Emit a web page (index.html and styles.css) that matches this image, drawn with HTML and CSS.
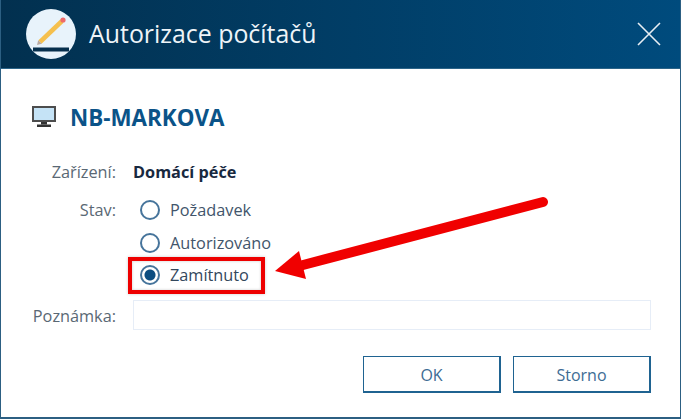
FILE: index.html
```html
<!DOCTYPE html>
<html lang="cs">
<head>
    <meta charset="UTF-8">
    <title>Autorizace počítačů</title>
    <link rel="stylesheet" href="styles.css">
</head>
<body>
    <div class="dialog">
        <div class="header">
            <svg class="logo" width="50" height="50" viewBox="0 0 50 50">
                <circle cx="25" cy="25" r="25" fill="#e8f3fb"/>
                <path d="M14 33 L36 12" stroke="#f5c04e" stroke-width="4.5"/>
                <path d="M15.800 34.800 L12.200 31.200 L11 36 Z" fill="#b9a8a0"/>
                <circle cx="37" cy="11" r="2.600" fill="#ee6a6a"/>
                <rect x="7" y="38.500" width="36" height="4" fill="#062f4d"/>
            </svg>
            <div class="title">Autorizace počítačů</div>
            <svg class="close" width="24" height="24" viewBox="0 0 24 24">
                <path d="M1 1 L23 23 M23 1 L1 23" stroke="#e8eef3" stroke-width="1.600" fill="none"/>
            </svg>
        </div>

        <div class="content">
            <div class="computer">
                <svg width="24" height="22" viewBox="0 0 24 22">
                    <rect x="1" y="1" width="22" height="14" fill="#c5e3f6" stroke="#4d4d4d" stroke-width="2"/>
                    <rect x="9" y="16" width="6" height="2.500" fill="#333"/>
                    <rect x="5" y="18.500" width="14" height="2.500" fill="#333"/>
                </svg>
                <span class="computer-name">NB-MARKOVA</span>
            </div>

            <div class="form">
                <div class="label device-label">Zařízení:</div>
                <div class="device">Domácí péče</div>

                <div class="label state-label">Stav:</div>
                <div class="radios">
                    <div class="radio"><span class="dot"></span>Požadavek</div>
                    <div class="radio"><span class="dot"></span>Autorizováno</div>
                    <div class="radio checked"><span class="dot"></span>Zamítnuto</div>
                </div>

                <div class="label note-label">Poznámka:</div>
                <div class="note"></div>
            </div>

            <div class="buttons">
                <div class="button">OK</div>
                <div class="button">Storno</div>
            </div>
        </div>

        <div class="highlight"></div>
        <svg class="arrow" width="290" height="110" viewBox="0 0 290 110">
            <path d="M270 13 L30 76" stroke="#f00000" stroke-width="10" stroke-linecap="round" fill="none"/>
            <path d="M2 82 L26 62 L33 90 Z" fill="#f00000"/>
        </svg>
    </div>
</body>
</html>
```

FILE: styles.css
```css
html, body {
    margin: 0;
    padding: 0;
}

body {
    width: 681px;
    height: 419px;
    font-family: "Open Sans", sans-serif;
    background-color: white;
    overflow: hidden;
}

.dialog {
    position: relative;
    box-sizing: border-box;
    width: 681px;
    height: 419px;
    background-color: white;
    border: 1px solid #2c5f82;
    border-top: none;
    border-bottom-width: 2px;
}

.header {
    display: flex;
    align-items: center;
    height: 68px;
    padding-left: 25px;
    padding-right: 19px;
    background: linear-gradient(to right, #02304f, #004b7d);
    border-bottom: 1px solid #2c6488;
}

.logo {
    flex: none;
}

.title {
    flex: 1;
    margin-left: 13px;
    margin-bottom: 2px;
    font-size: 24.900px;
    color: #eef4f8;
}

.close {
    flex: none;
}

.content {
    padding: 0 29px 0 31px;
}

.computer {
    display: flex;
    align-items: center;
    margin-top: 33px;
    height: 30px;
}

.computer-name {
    margin-left: 14px;
    font-size: 22.400px;
    font-weight: 700;
    color: #0b5388;
}

.form {
    display: grid;
    grid-template-columns: 84px 1fr;
    column-gap: 17px;
    margin-top: 30px;
}

.label {
    text-align: right;
    font-size: 16.300px;
    color: #5a6874;
}

.device-label, .device {
    line-height: 20px;
}

.device {
    font-size: 16.300px;
    font-weight: 700;
    color: #18293f;
}

.state-label {
    margin-top: 18px;
    line-height: 20px;
}

.radios {
    margin-top: 18px;
    display: flex;
    flex-direction: column;
    gap: 12.500px;
    padding-left: 7px;
    height: 100px;
}

.radio {
    display: flex;
    align-items: center;
    height: 20px;
    font-size: 16.300px;
    color: #42556b;
}

.dot {
    box-sizing: border-box;
    width: 20px;
    height: 20px;
    margin-right: 10px;
    border: 2px solid #46749b;
    border-radius: 50%;
    background-color: white;
}

.checked {
    color: #33475c;
}

.checked .dot {
    background: radial-gradient(circle, #0b4c80 0 5px, white 6px);
}

.note-label {
    margin-top: 6px;
    line-height: 20px;
}

.note {
    box-sizing: border-box;
    height: 30px;
    border: 1px solid #e6edf7;
}

.buttons {
    display: flex;
    justify-content: flex-end;
    gap: 12px;
    margin-top: 26px;
}

.button {
    box-sizing: border-box;
    width: 138px;
    height: 37px;
    line-height: 37px;
    text-align: center;
    font-size: 16px;
    color: #3d6c94;
    border: 1px solid #1f6391;
    border-bottom-width: 2px;
    border-right-width: 2px;
}

.highlight {
    position: absolute;
    left: 127px;
    top: 257px;
    width: 129px;
    height: 29px;
    border: 4px solid #ee0000;
    box-shadow: 0 0 3px rgba(0, 0, 0, 0.2), inset 0 0 3px rgba(0, 0, 0, 0.2);
}

.arrow {
    position: absolute;
    left: 272px;
    top: 189px;
}
```
